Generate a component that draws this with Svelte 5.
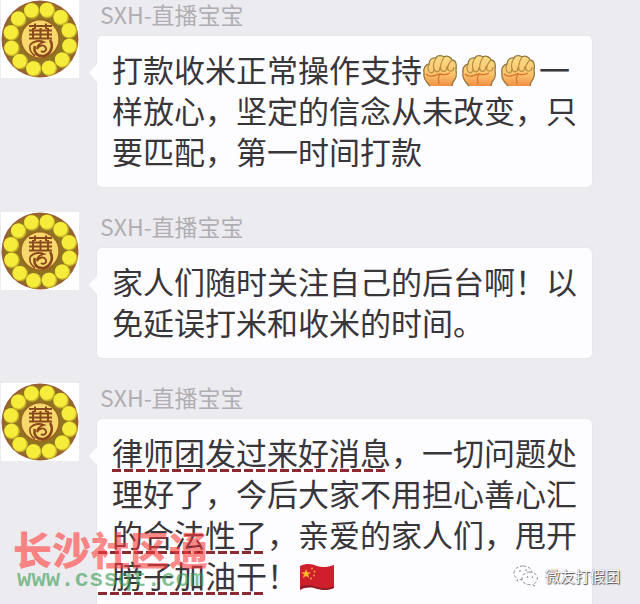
<script lang="ts">
  type Part = { text?: string; underline?: boolean; bleed?: boolean; icon?: 'fist' | 'flag' };
  type Message = { id: number; sender: string; parts: Part[] };

  const sender = 'SXH-直播宝宝';

  const messages: Message[] = [
    {
      id: 1,
      sender,
      parts: [
        { text: '打款收米正常操作支持' },
        { icon: 'fist' },
        { icon: 'fist' },
        { icon: 'fist' },
        { text: '一样放心，坚定的信念从未改变，只要匹配，第一时间打款' }
      ]
    },
    {
      id: 2,
      sender,
      parts: [{ text: '家人们随时关注自己的后台啊！以免延误打米和收米的时间。' }]
    },
    {
      id: 3,
      sender,
      parts: [
        { text: '律师团发过来好消息', underline: true },
        { text: '，一切问题处理好了，今后大家不用担心善心汇' },
        { text: '的合法性了', underline: true, bleed: true },
        { text: '，亲爱的家人们，甩开' },
        { text: '膀子加油干', underline: true, bleed: true },
        { text: '！' },
        { icon: 'flag' }
      ]
    }
  ];

  // Twelve coins around the badge
  const coins = Array.from({ length: 12 }, (_, i) => {
    const angle = ((i * 30 + 13) * Math.PI) / 180;
    return { x: 39 + 30 * Math.sin(angle), y: 39 - 30 * Math.cos(angle) };
  });
</script>

{#snippet avatar()}
  <svg class="avatar" viewBox="0 0 78 78" role="img" aria-label="avatar">
    <rect width="78" height="78" fill="#fff" />
    <circle cx="39" cy="39" r="38.5" fill="#9a6232" />
    <circle cx="39" cy="39" r="36" fill="#8f7423" />
    {#each coins as coin}
      <circle cx={coin.x + 0.6} cy={coin.y + 0.6} r="7.8" fill="#cdb528" />
      <circle cx={coin.x} cy={coin.y} r="7" fill="#f6ec3c" />
    {/each}
    <circle cx="39" cy="39" r="20" fill="#9c641f" />
    <circle cx="39" cy="39" r="18.4" fill="#f7d86c" />
    <g fill="none" stroke="#8b481d" stroke-width="2">
      <path d="M28 26H51M34 23.500V29M45 23.500V29M28 30.500H51M28 34.500H51M32 28V38M39.500 28V38M47 28V38M28 38.500H51" />
      <path d="M49 40C53 46 50 54 43 56C36 57 32 52 34 46" stroke-width="2.600" />
      <path d="M29 45C32 41 38 40 43 42C39 43 36 45 36 49C38 45 43 44 45 48C46 51 42 53 40 51" stroke-width="1.800" />
      <path d="M29 45C28 50 30 53 34 56" stroke-width="1.600" />
    </g>
  </svg>
{/snippet}

{#snippet fist()}
  <svg class="fist" viewBox="0 0 39 34" role="img" aria-label="fist">
    <defs>
      <linearGradient id="skin" x1="0" y1="0" x2="0" y2="1">
        <stop offset="0" stop-color="#fcdc84" />
        <stop offset="0.6" stop-color="#fbc66e" />
        <stop offset="1" stop-color="#f08f45" />
      </linearGradient>
    </defs>
    <path
      d="M8 32C4 28 1 24 2 19C1 15 3 11 7 10C7 6 10 3 14 4C15 1 20 1 22 3C25 1 29 3 30 6C34 6 35 11 34 16C35 21 34 25 31 28L30 32Z"
      fill="url(#skin)"
    />
    <path
      d="M8 32C4 28 1 24 2 19C1 15 3 11 7 10C7 6 10 3 14 4C15 1 20 1 22 3C25 1 29 3 30 6C34 6 35 11 34 16C35 21 34 25 31 28L30 32"
      fill="none"
      stroke="#91783f"
      stroke-width="1.300"
    />
    <path
      d="M7 10C5 14 6 18 9 19C11 19 12 17 12 14M14 4C11 9 11 14 13 17C16 19 18 17 18 13M22 3C19 8 18 12 19 16C22 19 25 17 25 12M30 6C27 9 25 13 26 16C29 18 32 17 32 13"
      fill="none"
      stroke="#b58b45"
      stroke-width="1.200"
    />
    <path d="M4 20C9 25 14 20 18 20C22 21 25 21 28 19M18 21C15 23 17 26 17 30" fill="none" stroke="#d9742e" stroke-width="1.300" />
  </svg>
{/snippet}

{#snippet flag()}
  <svg class="flag" viewBox="0 0 38 28" role="img" aria-label="China">
    <path d="M2 3C9 0 14 1 19 3C25 5 30 4 36 2V24C30 27 24 26 19 25C13 23 8 23 2 26Z" fill="#cf1f2c" />
    <path d="M2 24C8 21 13 22 19 24C24 25 30 26 36 23V25C30 28 24 27 19 26C13 24 8 24 2 27Z" fill="#8e1c24" />
    <path d="M8 6L9.300 9.300L13 9.400L10.200 11.500L11.200 15L8 13L5 15L6 11.500L3.300 9.400L6.900 9.300Z" fill="#fbb62e" />
    <g fill="#f5a52c">
      <circle cx="14" cy="5.500" r="1" />
      <circle cx="16.500" cy="8.500" r="1" />
      <circle cx="16" cy="12.500" r="1" />
      <circle cx="13" cy="15.500" r="1" />
    </g>
  </svg>
{/snippet}

<main class="chat">
  {#each messages as message (message.id)}
    <article class="message">
      {@render avatar()}
      <div class="body">
        <header class="sender">{message.sender}</header>
        <p class="bubble">
          {#each message.parts as part}{#if part.icon === 'fist'}{@render fist()}{:else if part.icon === 'flag'}{@render flag()}{:else if part.underline}<span class="underline" class:bleed={part.bleed}>{part.text}</span>{:else}{part.text}{/if}{/each}
        </p>
      </div>
    </article>
  {/each}

  <div class="site-mark">
    <span class="site-name">长沙社区通</span>
    <span class="site-url">www.cssqt.com</span>
  </div>

  <div class="account-mark">
    <svg class="wechat" viewBox="0 0 26 22" aria-hidden="true">
      <g fill="#fdfcfe" stroke="#8d8b91" stroke-width="1" stroke-dasharray="3 2">
        <path d="M10 1C5 1 1 4 1 8C1 10.500 2.500 12.500 4.500 13.500L4 16L7 14.500C12 16 19 13 19 8C19 4 15 1 10 1Z" />
        <path d="M17 7C12.500 7 9 10 9 13.500C9 17.500 13 20.500 19 19.500L22 21L21.500 18.500C27 14.500 24 7 17 7Z" />
      </g>
      <g fill="#77757a">
        <circle cx="7" cy="6" r="0.8" />
        <circle cx="13" cy="5" r="0.8" />
        <circle cx="14.500" cy="12" r="0.8" />
        <circle cx="19.500" cy="12" r="0.8" />
      </g>
    </svg>
    <span>微友打假团</span>
  </div>
</main>

<style>
  :global(body) {
    margin: 0;
    background: #ecebef;
  }

  .chat {
    position: relative;
    box-sizing: border-box;
    height: 100vh;
    overflow: hidden;
    background: #ecebef;
    font-family: 'Noto Sans CJK SC', sans-serif;
    text-spacing-trim: space-all;
  }

  .message {
    display: flex;
    align-items: flex-start;
    gap: 18px;
    margin-bottom: 25px;
    padding: 0 48px 0 1px;
  }

  .avatar {
    flex: none;
    width: 78px;
    height: 78px;
  }

  .body {
    flex: 1;
    min-width: 0;
  }

  .sender {
    margin-bottom: 8px;
    padding-left: 3px;
    color: #b0aeb3;
    font-size: 23px;
    line-height: 28px;
  }

  .bubble {
    position: relative;
    margin: 0;
    padding: 12px 15px 16px;
    border-radius: 5px;
    background: #fdfcfe;
    box-shadow: 0 0 2px #dddbe1;
    color: #38363b;
    font-size: 31px;
    line-height: 41px;
  }

  .bubble::before {
    content: '';
    position: absolute;
    top: 28px;
    left: -8px;
    border: 9px solid transparent;
    border-left: 0;
    border-right: 8px solid #fdfcfe;
  }

  .underline {
    position: relative;
  }

  .underline::after {
    content: '';
    position: absolute;
    right: 4px;
    bottom: 2px;
    left: 0;
    height: 3px;
    background: repeating-linear-gradient(90deg, #8c2a30 0 9px, transparent 9px 12px);
  }

  .bleed::after {
    left: -14px;
  }

  .fist {
    width: 39px;
    height: 34px;
    vertical-align: -6px;
  }

  .flag {
    width: 38px;
    height: 28px;
    vertical-align: -3px;
  }

  .site-mark {
    position: absolute;
    bottom: 12px;
    left: 13px;
    display: flex;
    flex-direction: column;
  }

  .site-name {
    color: rgb(255 60 60 / 60%);
    font-size: 39px;
    font-weight: 900;
    line-height: 40px;
  }

  .site-url {
    padding-left: 4px;
    color: rgb(50 155 80 / 60%);
    font-family: 'Liberation Mono', monospace;
    font-size: 24px;
    font-weight: 700;
    line-height: 24px;
  }

  .account-mark {
    position: absolute;
    right: 20px;
    bottom: 16px;
    display: flex;
    align-items: center;
    gap: 6px;
    color: #fff;
    font-size: 15px;
    line-height: 24px;
    text-shadow: 1px 1px 1px #4c4a50, 0 0 1px #6c6a70;
  }

  .wechat {
    width: 26px;
    height: 22px;
  }
</style>
